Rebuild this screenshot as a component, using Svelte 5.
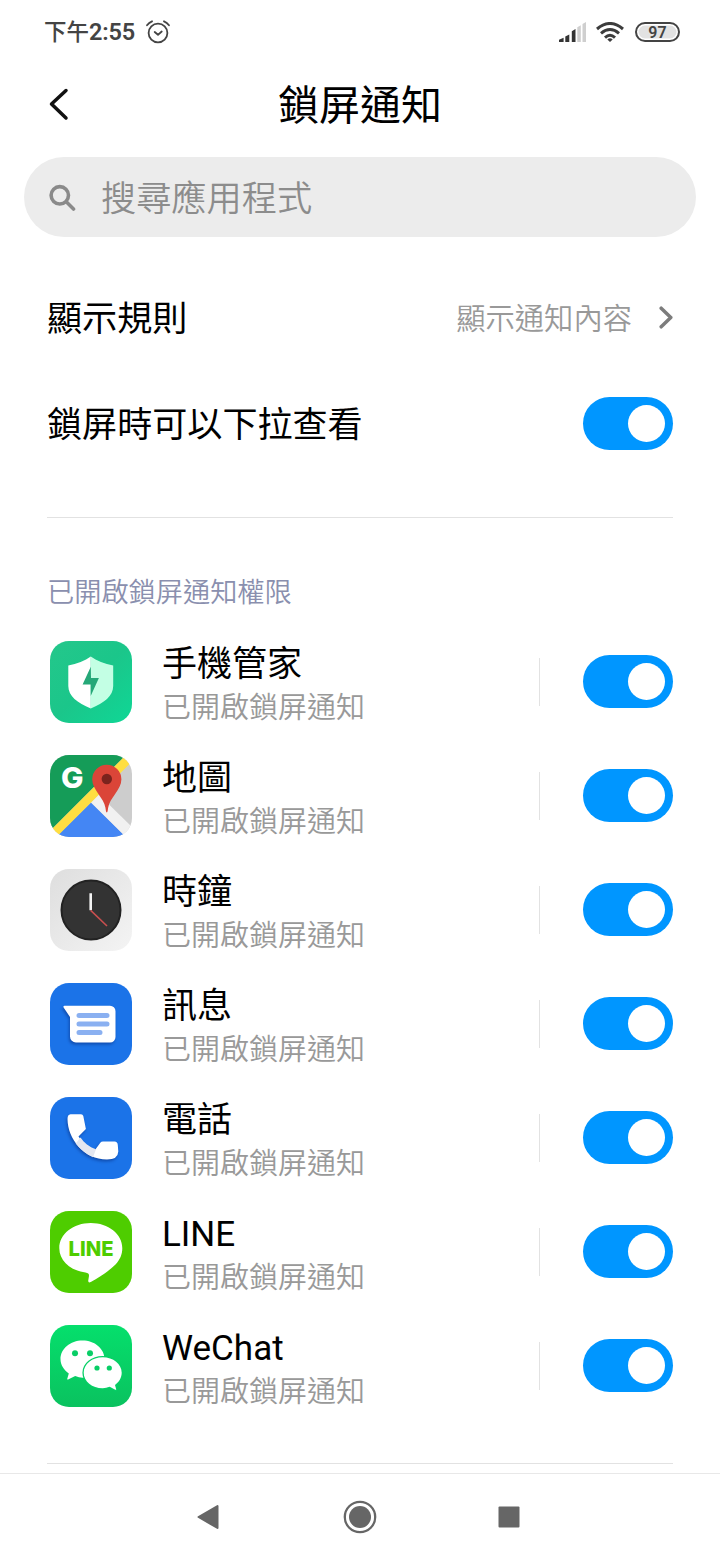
<script lang="ts">
	type App = { id: string; name: string; enabled: boolean };

	let pulldown = $state(true);
	let query = $state('');

	let apps: App[] = $state([
		{ id: 'security', name: '手機管家', enabled: true },
		{ id: 'maps', name: '地圖', enabled: true },
		{ id: 'clock', name: '時鐘', enabled: true },
		{ id: 'messages', name: '訊息', enabled: true },
		{ id: 'phone', name: '電話', enabled: true },
		{ id: 'line', name: 'LINE', enabled: true },
		{ id: 'wechat', name: 'WeChat', enabled: true }
	]);
</script>

{#snippet toggle(on: boolean, label: string, flip: () => void)}
	<button class="toggle" class:on role="switch" aria-checked={on} aria-label={label} onclick={flip}>
		<span class="knob"></span>
	</button>
{/snippet}

{#snippet appIcon(id: string)}
	<svg class="app-icon" viewBox="0 0 82 82" aria-hidden="true">
		<defs>
			<clipPath id="tile-{id}"><rect width="82" height="82" rx="19" /></clipPath>
		</defs>
		<g clip-path="url(#tile-{id})">
			{#if id === 'security'}
				<linearGradient id="sec-bg" x1="0" y1="0" x2="1" y2="1">
					<stop offset="0" stop-color="#24c78b" />
					<stop offset="0.5" stop-color="#1bc68a" />
					<stop offset="1" stop-color="#0fd796" />
				</linearGradient>
				<rect width="82" height="82" fill="url(#sec-bg)" />
				<path d="M40.8 15.6C35 20 27 23 18.3 24.6V45c0 10 9 17 22.5 22.4z" fill="#fff" />
				<path d="M40.8 15.6C46.6 20 54.6 23 63.2 24.6V45c0 10-9 17-22.4 22.4z" fill="#c3ffe4" />
				<path d="M40.8 25.7L32.6 43.4H40.7V55L48.9 37H41z" fill="#25a878" />
			{:else if id === 'maps'}
				<rect width="82" height="82" fill="#cdcdcd" />
				<path d="M0 0H76L0 76z" fill="#159c58" />
				<path d="M41 47.5L76 82H6z" fill="#4486f4" />
				<path d="M41 47.5L48.8 39.5L84 74V90z" fill="#f1f1f1" />
				<path d="M76 0H88.5L0 88.5V76z" fill="#ffde41" />
				<text x="11" y="33.3" textLength="22.5" lengthAdjust="spacingAndGlyphs" class="logo-g">G</text>
				<path d="M56.8 57.5C56 57.5 55.8 55 55.4 52.5C54 43 42.2 35 42.2 24.3a14.6 14.6 0 0 1 29.2 0C71.4 35 59.6 43 58.2 52.5C57.8 55 57.6 57.5 56.8 57.5z" fill="#db4538" />
				<circle cx="56.8" cy="24" r="5.2" fill="#7b231d" />
			{:else if id === 'clock'}
				<linearGradient id="clk-bg" x1="0" y1="0" x2="1" y2="1">
					<stop offset="0" stop-color="#dedede" />
					<stop offset="1" stop-color="#f4f4f4" />
				</linearGradient>
				<rect width="82" height="82" fill="url(#clk-bg)" />
				<circle cx="41" cy="41" r="29.5" fill="#333" stroke="#222" stroke-width="2" />
				<path d="M40.7 24.3V41.3" stroke="#f4f4f4" stroke-width="2.6" />
				<path d="M40.7 41.3L57 57" stroke="#c94f4f" stroke-width="1.6" />
			{:else if id === 'messages'}
				<rect width="82" height="82" fill="#1b73e8" />
				<path class="shade" d="M14.5 22.7H60a5.5 5.5 0 0 1 5.5 5.5V54a5.5 5.5 0 0 1-5.5 5.5H26a6 6 0 0 1-6-6V34L13.6 24.5Q13 22.7 14.5 22.7z" fill="#fff" />
				<g stroke="#8ab0f1" stroke-width="5" stroke-linecap="round">
					<path d="M29 32.5H57M29 41H57M29 49.5H50" />
				</g>
			{:else if id === 'phone'}
				<rect width="82" height="82" fill="#1b73e8" />
				<path class="shade" d="M20.5 17.3H31Q32.8 17.3 33.3 19L35.9 32L28.5 39.5C32 45 38 50 45 53L50.3 45.8Q51.3 44.6 53 44.6H64.5Q67.6 44.8 67.8 48L68.3 54.5Q68 62.5 57 62.5C34 62.5 17.7 42 17.5 22Q17.5 17.6 20.5 17.3z" fill="#fff" />
				<path d="M25.7 46.5L30.5 40.500C34 45.500 39 50 46 52.200L43 60.300C36.500 57.500 30.500 52.500 25.700 46.500z" fill="#e4e7f0" />
			{:else if id === 'line'}
				<rect width="82" height="82" fill="#4ecd00" />
				<path d="M40.8 12C23.4 12 9.3 23 9.3 37.2C9.3 49.5 20 59.3 35.5 61.6C38.5 62.2 39.3 63 38.9 65.5L38.2 69.8Q38.2 72.3 40.8 71C50 66 59 60 65.5 53.5C70 48.5 72.3 43.5 72.3 37.2C72.3 23 58.2 12 40.8 12z" fill="#fff" />
				<text x="18.6" y="45" textLength="45" lengthAdjust="spacingAndGlyphs" class="logo-line">LINE</text>
			{:else}
				<linearGradient id="wc-bg" x1="0" y1="0" x2="0" y2="1">
					<stop offset="0" stop-color="#05df6c" />
					<stop offset="1" stop-color="#0ac25f" />
				</linearGradient>
				<rect width="82" height="82" fill="url(#wc-bg)" />
				<path d="M32.5 15.4c-12.2 0-22 8.2-22 18.7 0 6 3.2 10.8 8.3 14.3L17.2 54q0 .9.9.5L25.2 51q3.8 1.7 7.5 1.7c12 0 21.8-8 21.8-18.6s-9.8-18.7-22-18.7z" fill="#fff" />
				<path d="M52.7 32.2c10.5 0 19 6.8 19 15.5 0 5-2.7 9.3-6.7 12.2l1.2 4.3q0 .9-.9.5l-5.6-2.9q-3.6 1.4-7 1.4c-10.5 0-19-6.8-19-15.5s8.5-15.5 19-15.5z" fill="#fff" stroke="#07cf66" stroke-width="2.6" paint-order="stroke" />
				<g fill="#08ce66">
					<circle cx="25" cy="28.2" r="3" />
					<circle cx="40" cy="28.2" r="3" />
					<circle cx="47" cy="43" r="2.6" />
					<circle cx="59.3" cy="43" r="2.6" />
				</g>
			{/if}
		</g>
	</svg>
{/snippet}

<div class="screen">
	<div class="status">
		<span class="time">下午<b>2:55</b></span>
		<svg class="alarm" width="24" height="24" viewBox="0 0 24 24">
			<g fill="none" stroke="#444" stroke-width="1.8" stroke-linecap="round" stroke-linejoin="round">
				<circle cx="12" cy="13" r="9.4" />
				<path d="M8.7 12l3.3 2.8 3.7-3.3M1 5.3Q3 2.6 6 1.3M23 5.3Q21 2.6 18 1.3" />
			</g>
		</svg>
		<span class="grow"></span>
		<svg class="signal" width="27" height="20" viewBox="0 0 27 20">
			<path d="M0 20v-2.3l4.6-2V20zM6.3 20v-5.6l4-2V20zM12.8 20V9.2l3.7-2.2V20z" fill="#333" />
			<path d="M18.3 20V5.3l3.5-2.1V20zM23.5 20V2l3.5-2V20z" fill="#cfcfcf" />
		</svg>
		<svg class="wifi" width="28" height="20" viewBox="0 0 28 20">
			<g fill="none" stroke="#3c3c3c" stroke-width="3">
				<path d="M1 7Q14-4 27 7M5 11.3Q14 3.7 23 11.3M9 15.6Q14 11 19 15.6" />
			</g>
			<path d="M11.3 17.5Q14 15.2 16.7 17.5L14 20z" fill="#3c3c3c" />
		</svg>
		<span class="battery">97</span>
	</div>

	<header class="header">
		<svg class="back" width="22" height="34" viewBox="0 0 22 34">
			<path d="M18 3.5L3.5 17 18 31" fill="none" stroke="#111" stroke-width="3.5" stroke-linecap="round" stroke-linejoin="round" />
		</svg>
		<h1>鎖屏通知</h1>
	</header>

	<label class="search">
		<svg width="27" height="27" viewBox="0 0 27 27">
			<g fill="none" stroke="#8a8a8a" stroke-width="3.6" stroke-linecap="round">
				<circle cx="10.8" cy="11.3" r="8.7" />
				<path d="M17.5 18L24.5 25" />
			</g>
		</svg>
		<input type="text" placeholder="搜尋應用程式" bind:value={query} />
	</label>

	<section class="rules">
		<div class="row">
			<span class="label">顯示規則</span>
			<span class="value">顯示通知內容</span>
			<svg class="chevron" width="14" height="24" viewBox="0 0 14 24">
				<path d="M2.2 2.2L11.8 11.5 2.2 20.8" fill="none" stroke="#7c7c7c" stroke-width="3.5" stroke-linecap="round" stroke-linejoin="round" />
			</svg>
		</div>
		<div class="row">
			<span class="label">鎖屏時可以下拉查看</span>
			{@render toggle(pulldown, '鎖屏時可以下拉查看', () => (pulldown = !pulldown))}
		</div>
	</section>

	<section class="apps">
		<h2>已開啟鎖屏通知權限</h2>
		{#each apps as app (app.id)}
			<div class="app">
				{@render appIcon(app.id)}
				<div class="info">
					<span class="name">{app.name}</span>
					<span class="state">已開啟鎖屏通知</span>
				</div>
				<span class="split"></span>
				{@render toggle(app.enabled, app.name, () => (app.enabled = !app.enabled))}
			</div>
		{/each}
	</section>

	<nav class="navbar">
		<svg width="22" height="26" viewBox="0 0 22 26">
			<path d="M20.5 2V24L1.5 13z" fill="#666" stroke="#666" stroke-width="2" stroke-linejoin="round" />
		</svg>
		<svg class="home" width="34" height="34" viewBox="0 0 34 34">
			<circle cx="17" cy="17" r="15.2" fill="none" stroke="#666" stroke-width="2.3" />
			<circle cx="17" cy="17" r="11" fill="#666" />
		</svg>
		<svg width="22" height="22" viewBox="0 0 22 22">
			<rect x=".5" y=".5" width="21" height="21" rx="1" fill="#666" />
		</svg>
	</nav>
</div>

<style>
	:global(body) {
		margin: 0;
		background: #fff;
	}

	.screen {
		display: flex;
		flex-direction: column;
		box-sizing: border-box;
		width: 720px;
		height: 1560px;
		overflow: hidden;
		background: #fff;
		color: #000;
		font-family: Roboto, 'Noto Sans CJK TC', sans-serif;
		font-weight: 350;
	}

	svg {
		display: block;
		flex: none;
	}

	/* status bar */
	.status {
		display: flex;
		align-items: center;
		height: 64px;
		padding: 0 40px 0 44px;
		box-sizing: border-box;
		color: #444;
	}

	.time {
		font-size: 22.5px;
		font-weight: 500;
		line-height: 30px;
		white-space: nowrap;
	}

	.time b {
		font-size: 23.5px;
		font-weight: 600;
		letter-spacing: -0.2px;
	}

	.alarm {
		margin-left: 11px;
	}

	.grow {
		flex: 1;
	}

	.wifi {
		margin: 0 11px 0 10px;
	}

	.battery {
		box-sizing: border-box;
		width: 45px;
		height: 20px;
		border: 2px solid #444;
		border-radius: 10px;
		background: #e2e2e2;
		box-shadow: inset 0 0 0 1.5px #fff;
		font-size: 16px;
		font-weight: 600;
		line-height: 17px;
		text-align: center;
	}

	/* title */
	.header {
		display: grid;
		grid-template-columns: 48px 1fr 48px;
		align-items: center;
		height: 80px;
		padding: 0 48px;
	}

	h1 {
		margin: 0;
		padding-top: 4px;
		font-size: 41px;
		font-weight: 400;
		line-height: 60px;
		text-align: center;
	}

	.search {
		display: flex;
		align-items: center;
		gap: 25px;
		height: 80px;
		margin: 13px 24px 0;
		padding: 0 25px;
		box-sizing: border-box;
		border-radius: 40px;
		background: #ececec;
	}

	.search input {
		flex: 1;
		min-width: 0;
		height: 60px;
		padding: 4px 0 0;
		box-sizing: border-box;
		border: 0;
		outline: 0;
		background: none;
		color: #333;
		font: inherit;
		font-size: 35.2px;
	}

	.search input::placeholder {
		color: #8c8c8c;
		opacity: 1;
	}

	/* general settings */
	.rules {
		margin: 28px 47px 0;
		padding-bottom: 40px;
		border-bottom: 1px solid #e2e2e2;
	}

	.row {
		display: flex;
		align-items: center;
		height: 106px;
	}

	.label {
		flex: 1;
		padding-bottom: 5px;
		font-size: 35.1px;
		font-weight: 400;
	}

	.value {
		padding-bottom: 5px;
		color: #999;
		font-size: 29.3px;
	}

	.chevron {
		margin-left: 27px;
	}

	.toggle {
		display: flex;
		align-items: center;
		flex: none;
		width: 90px;
		height: 53px;
		margin-bottom: 1px;
		padding: 0 8px;
		border: 0;
		border-radius: 27px;
		background: #ddd;
	}

	.toggle.on {
		justify-content: flex-end;
		background: #0096ff;
	}

	.knob {
		width: 37px;
		height: 37px;
		border-radius: 50%;
		background: #fff;
	}

	/* app list */
	.apps {
		margin: 0 47px;
		padding-bottom: 40px;
		border-bottom: 1px solid #e2e2e2;
	}

	h2 {
		height: 107px;
		margin: 0;
		padding-top: 55px;
		box-sizing: border-box;
		color: #8a8fae;
		font-size: 27.2px;
		font-weight: 350;
		line-height: 40px;
	}

	.app {
		display: flex;
		align-items: center;
		height: 114px;
	}

	.app-icon {
		width: 82px;
		height: 82px;
		margin: 0 30.5px 0 2.5px;
	}

	.info {
		display: flex;
		flex: 1;
		flex-direction: column;
		padding-top: 8px;
	}

	.name {
		font-size: 35px;
		font-weight: 400;
		line-height: 44px;
	}

	.state {
		color: #999;
		font-size: 29px;
		line-height: 42px;
	}

	.split {
		width: 1px;
		height: 48px;
		margin-right: 43px;
		background: #e2e2e2;
	}

	.logo-g {
		fill: #fff;
		font-family: Inter, sans-serif;
		font-size: 28.5px;
		font-weight: 800;
	}

	.logo-line {
		fill: #4ecd00;
		font-family: Inter, sans-serif;
		font-size: 20.6px;
		font-weight: 800;
	}

	.shade {
		filter: drop-shadow(-1px 2px 1.5px rgba(0, 20, 90, 0.4));
	}

	/* system navigation */
	.navbar {
		display: flex;
		align-items: center;
		justify-content: space-between;
		flex: 1;
		margin-top: 9px;
		padding: 0 200px 0 197px;
		border-top: 1px solid #e8e8e8;
	}

	.home {
		margin-left: 2px;
	}
</style>
